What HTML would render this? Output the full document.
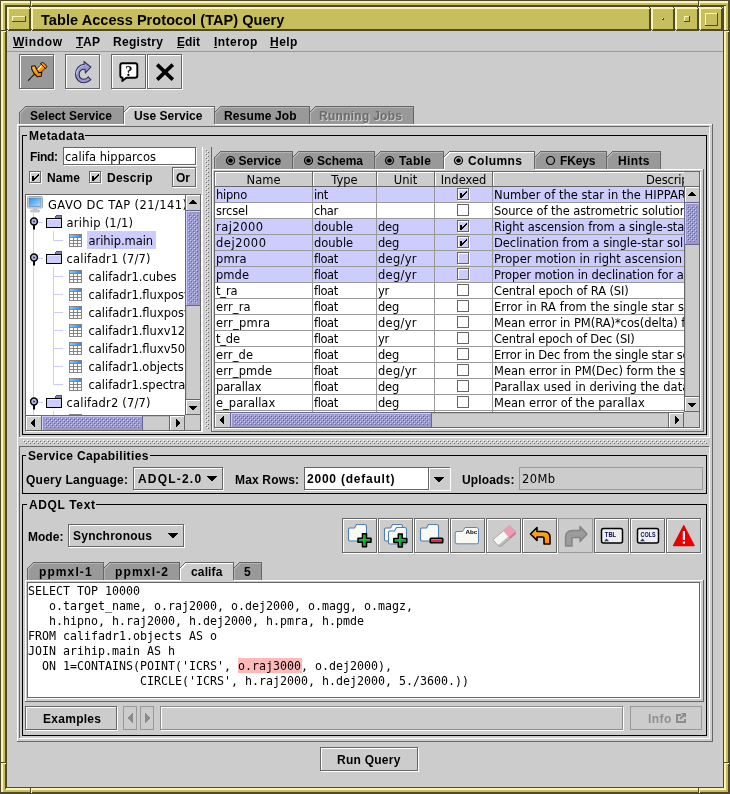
<!DOCTYPE html>
<html lang="en"><head><meta charset="utf-8"><title>Table Access Protocol (TAP) Query</title>
<style>
html,body{margin:0;padding:0;background:#cccccc;}
#w{will-change:transform;position:relative;width:730px;height:794px;overflow:hidden;background:#cccccc;}
#w div,#w span,#w svg{position:absolute;}
#w svg{overflow:visible;}
.t{white-space:pre;height:16px;line-height:16px;color:#000;font-size:12px;}
.b{font-family:"Liberation Sans",sans-serif;font-weight:bold;}
.p{font-family:"DejaVu Sans","Liberation Sans",sans-serif;font-size:11.5px;}
.m{font-family:"DejaVu Sans Mono","Liberation Mono",monospace;font-size:11.63px;height:15px;line-height:15px;}
.ttl{font-family:"Liberation Sans",sans-serif;font-weight:bold;font-size:14.5px;letter-spacing:0.06px;}
</style></head>
<body><div id="w">
<div style="left:0px;top:0px;width:730px;height:794px;background:#c7bf5d;"></div>
<div style="left:0px;top:0px;width:730px;height:1px;background:#4e4a2a;"></div>
<div style="left:0px;top:0px;width:1px;height:794px;background:#4e4a2a;"></div>
<div style="left:1px;top:1px;width:727px;height:2px;background:#fbf5b5;"></div>
<div style="left:1px;top:1px;width:2px;height:791px;background:#fbf5b5;"></div>
<div style="left:1px;top:792px;width:729px;height:2px;background:#4e4a2a;"></div>
<div style="left:728px;top:1px;width:2px;height:793px;background:#4e4a2a;"></div>
<div style="left:5px;top:5px;width:722px;height:2px;background:#4e4a2a;"></div>
<div style="left:5px;top:5px;width:2px;height:784px;background:#4e4a2a;"></div>
<div style="left:723px;top:7px;width:1px;height:781px;background:#4e4a2a;"></div>
<div style="left:724px;top:6px;width:2px;height:782px;background:#fbf5b5;"></div>
<div style="left:7px;top:787px;width:717px;height:1px;background:#4e4a2a;"></div>
<div style="left:6px;top:788px;width:720px;height:2px;background:#fbf5b5;"></div>
<div style="left:726px;top:3px;width:2px;height:789px;background:#c7bf5d;"></div>
<div style="left:3px;top:790px;width:725px;height:2px;background:#c7bf5d;"></div>
<div style="left:1px;top:791px;width:2px;height:1px;background:#fbf5b5;"></div>
<div style="left:1px;top:30px;width:5px;height:1px;background:#4e4a2a;"></div>
<div style="left:1px;top:31px;width:5px;height:1px;background:#fbf5b5;"></div>
<div style="left:724px;top:30px;width:5px;height:1px;background:#4e4a2a;"></div>
<div style="left:724px;top:31px;width:5px;height:1px;background:#fbf5b5;"></div>
<div style="left:1px;top:762px;width:5px;height:1px;background:#4e4a2a;"></div>
<div style="left:1px;top:763px;width:5px;height:1px;background:#fbf5b5;"></div>
<div style="left:724px;top:762px;width:5px;height:1px;background:#4e4a2a;"></div>
<div style="left:724px;top:763px;width:5px;height:1px;background:#fbf5b5;"></div>
<div style="left:30px;top:1px;width:1px;height:5px;background:#4e4a2a;"></div>
<div style="left:31px;top:1px;width:1px;height:5px;background:#fbf5b5;"></div>
<div style="left:30px;top:788px;width:1px;height:5px;background:#4e4a2a;"></div>
<div style="left:31px;top:788px;width:1px;height:5px;background:#fbf5b5;"></div>
<div style="left:698px;top:1px;width:1px;height:5px;background:#4e4a2a;"></div>
<div style="left:699px;top:1px;width:1px;height:5px;background:#fbf5b5;"></div>
<div style="left:698px;top:788px;width:1px;height:5px;background:#4e4a2a;"></div>
<div style="left:699px;top:788px;width:1px;height:5px;background:#fbf5b5;"></div>
<div style="left:7px;top:7px;width:24px;height:24px;background:#c7bf5d;"></div>
<div style="left:7px;top:7px;width:24px;height:2px;background:#fbf5b5;"></div>
<div style="left:7px;top:7px;width:2px;height:24px;background:#fbf5b5;"></div>
<div style="left:7px;top:29px;width:24px;height:2px;background:#4e4a2a;"></div>
<div style="left:29px;top:7px;width:2px;height:24px;background:#4e4a2a;"></div>
<div style="left:7px;top:30px;width:1px;height:1px;background:#fbf5b5;"></div>
<div style="left:30px;top:7px;width:1px;height:1px;background:#fbf5b5;"></div>
<div style="left:8px;top:29px;width:1px;height:1px;background:#fbf5b5;"></div>
<div style="left:29px;top:8px;width:1px;height:1px;background:#fbf5b5;"></div>
<div style="left:31px;top:7px;width:620px;height:24px;background:#c7bf5d;"></div>
<div style="left:31px;top:7px;width:620px;height:2px;background:#fbf5b5;"></div>
<div style="left:31px;top:7px;width:2px;height:24px;background:#fbf5b5;"></div>
<div style="left:31px;top:29px;width:620px;height:2px;background:#4e4a2a;"></div>
<div style="left:649px;top:7px;width:2px;height:24px;background:#4e4a2a;"></div>
<div style="left:31px;top:30px;width:1px;height:1px;background:#fbf5b5;"></div>
<div style="left:650px;top:7px;width:1px;height:1px;background:#fbf5b5;"></div>
<div style="left:32px;top:29px;width:1px;height:1px;background:#fbf5b5;"></div>
<div style="left:649px;top:8px;width:1px;height:1px;background:#fbf5b5;"></div>
<div style="left:651px;top:7px;width:24px;height:24px;background:#c7bf5d;"></div>
<div style="left:651px;top:7px;width:24px;height:2px;background:#fbf5b5;"></div>
<div style="left:651px;top:7px;width:2px;height:24px;background:#fbf5b5;"></div>
<div style="left:651px;top:29px;width:24px;height:2px;background:#4e4a2a;"></div>
<div style="left:673px;top:7px;width:2px;height:24px;background:#4e4a2a;"></div>
<div style="left:651px;top:30px;width:1px;height:1px;background:#fbf5b5;"></div>
<div style="left:674px;top:7px;width:1px;height:1px;background:#fbf5b5;"></div>
<div style="left:652px;top:29px;width:1px;height:1px;background:#fbf5b5;"></div>
<div style="left:673px;top:8px;width:1px;height:1px;background:#fbf5b5;"></div>
<div style="left:675px;top:7px;width:24px;height:24px;background:#c7bf5d;"></div>
<div style="left:675px;top:7px;width:24px;height:2px;background:#fbf5b5;"></div>
<div style="left:675px;top:7px;width:2px;height:24px;background:#fbf5b5;"></div>
<div style="left:675px;top:29px;width:24px;height:2px;background:#4e4a2a;"></div>
<div style="left:697px;top:7px;width:2px;height:24px;background:#4e4a2a;"></div>
<div style="left:675px;top:30px;width:1px;height:1px;background:#fbf5b5;"></div>
<div style="left:698px;top:7px;width:1px;height:1px;background:#fbf5b5;"></div>
<div style="left:676px;top:29px;width:1px;height:1px;background:#fbf5b5;"></div>
<div style="left:697px;top:8px;width:1px;height:1px;background:#fbf5b5;"></div>
<div style="left:699px;top:7px;width:24px;height:24px;background:#c7bf5d;"></div>
<div style="left:699px;top:7px;width:24px;height:2px;background:#fbf5b5;"></div>
<div style="left:699px;top:7px;width:2px;height:24px;background:#fbf5b5;"></div>
<div style="left:699px;top:29px;width:24px;height:2px;background:#4e4a2a;"></div>
<div style="left:721px;top:7px;width:2px;height:24px;background:#4e4a2a;"></div>
<div style="left:699px;top:30px;width:1px;height:1px;background:#fbf5b5;"></div>
<div style="left:722px;top:7px;width:1px;height:1px;background:#fbf5b5;"></div>
<div style="left:700px;top:29px;width:1px;height:1px;background:#fbf5b5;"></div>
<div style="left:721px;top:8px;width:1px;height:1px;background:#fbf5b5;"></div>
<div style="left:12px;top:16px;width:14px;height:6px;background:#c7bf5d;"></div>
<div style="left:12px;top:16px;width:14px;height:1px;background:#fbf5b5;"></div>
<div style="left:12px;top:16px;width:1px;height:6px;background:#fbf5b5;"></div>
<div style="left:12px;top:21px;width:14px;height:1px;background:#4e4a2a;"></div>
<div style="left:25px;top:16px;width:1px;height:6px;background:#4e4a2a;"></div>
<div style="left:662px;top:18px;width:2px;height:2px;background:#c7bf5d;"></div>
<div style="left:662px;top:18px;width:2px;height:1px;background:#fbf5b5;"></div>
<div style="left:662px;top:18px;width:1px;height:2px;background:#fbf5b5;"></div>
<div style="left:662px;top:19px;width:2px;height:1px;background:#4e4a2a;"></div>
<div style="left:663px;top:18px;width:1px;height:2px;background:#4e4a2a;"></div>
<div style="left:684px;top:16px;width:6px;height:6px;background:#c7bf5d;"></div>
<div style="left:684px;top:16px;width:6px;height:1px;background:#fbf5b5;"></div>
<div style="left:684px;top:16px;width:1px;height:6px;background:#fbf5b5;"></div>
<div style="left:684px;top:21px;width:6px;height:1px;background:#4e4a2a;"></div>
<div style="left:689px;top:16px;width:1px;height:6px;background:#4e4a2a;"></div>
<div style="left:705px;top:13px;width:13px;height:13px;background:#c7bf5d;"></div>
<div style="left:705px;top:13px;width:13px;height:1px;background:#fbf5b5;"></div>
<div style="left:705px;top:13px;width:1px;height:13px;background:#fbf5b5;"></div>
<div style="left:705px;top:25px;width:13px;height:1px;background:#4e4a2a;"></div>
<div style="left:717px;top:13px;width:1px;height:13px;background:#4e4a2a;"></div>
<span id="ttl" class="t ttl" style="left:41px;top:12px;">Table Access Protocol (TAP) Query</span>
<div style="left:7px;top:31px;width:716px;height:756px;background:#cccccc;"></div>
<div style="left:7px;top:51px;width:716px;height:1px;background:#999999;"></div>
<span id="t1" class="t b" style="left:13px;top:34px;letter-spacing:0.622px;">Window</span>
<span id="t2" class="t b" style="left:76px;top:34px;letter-spacing:0.445px;">TAP</span>
<span id="t3" class="t b" style="left:113px;top:34px;letter-spacing:0.281px;">Registry</span>
<span id="t4" class="t b" style="left:177px;top:34px;letter-spacing:0.109px;">Edit</span>
<span id="t5" class="t b" style="left:214px;top:34px;letter-spacing:0.455px;">Interop</span>
<span id="t6" class="t b" style="left:270px;top:34px;letter-spacing:0.461px;">Help</span>
<div style="left:13px;top:47px;width:11px;height:1px;background:#000;"></div>
<div style="left:76px;top:47px;width:7px;height:1px;background:#000;"></div>
<div style="left:177px;top:47px;width:7px;height:1px;background:#000;"></div>
<div style="left:214px;top:47px;width:3px;height:1px;background:#000;"></div>
<div style="left:270px;top:47px;width:8px;height:1px;background:#000;"></div>
<div style="left:19px;top:54px;width:35px;height:35px;box-sizing:border-box;border:1px solid #666666;background:#999999;box-shadow:inset 1px 1px 0 #ffffff,1px 1px 0 #ffffff;"></div>
<div style="left:65px;top:54px;width:35px;height:35px;box-sizing:border-box;border:1px solid #666666;background:#cccccc;box-shadow:inset 1px 1px 0 #ffffff,1px 1px 0 #ffffff;"></div>
<div style="left:111px;top:54px;width:35px;height:35px;box-sizing:border-box;border:1px solid #666666;background:#cccccc;box-shadow:inset 1px 1px 0 #ffffff,1px 1px 0 #ffffff;"></div>
<div style="left:147px;top:54px;width:35px;height:35px;box-sizing:border-box;border:1px solid #666666;background:#cccccc;box-shadow:inset 1px 1px 0 #ffffff,1px 1px 0 #ffffff;"></div>
<svg style="left:26px;top:60px;" width="24" height="24" viewBox="0 0 24 24">
<defs><linearGradient id="pg" x1="0" y1="0" x2="1" y2="1"><stop offset="0" stop-color="#ffd24a"/><stop offset="0.45" stop-color="#fb9a12"/><stop offset="1" stop-color="#e87a00"/></linearGradient></defs>
<line x1="2.2" y1="20.8" x2="9" y2="14" stroke="#111" stroke-width="1.5"/>
<line x1="3.4" y1="20.4" x2="9.4" y2="14.4" stroke="#f4f4f4" stroke-width="0.9" stroke-dasharray="1 0.8"/>
<g transform="translate(-0.7,0.7)"><path d="M16 3.6 L20 7.400 L13.800 13.800 L10 10 Z" fill="url(#pg)" stroke="#2a1800" stroke-width="0.9"/>
<line x1="11.6" y1="9.800" x2="16.6" y2="4.800" stroke="#ffe89a" stroke-width="1.5"/>
<path d="M15.200 2.800 L17.600 1.600 L21.600 5.600 L20.300 8 Z" fill="#f08a00" stroke="#1a0e00" stroke-width="1"/>
<line x1="17" y1="3" x2="20.300" y2="6.200" stroke="#ffb63c" stroke-width="1"/></g>
<path d="M5.600 6.200 L9 5.800 L10.600 9.200 L12.800 12.600 L15.700 12.200 L15.300 16.300 L11.200 16.700 L8 13.400 L5.800 9.200 Z" fill="url(#pg)" stroke="#1a0e00" stroke-width="1.100" stroke-linejoin="round"/>
</svg>
<svg style="left:72px;top:59px;" width="24" height="26" viewBox="0 0 24 26"><g transform="translate(1.3,2.2) scale(0.9)">
<path d="M12 3.5 L12 0.5 L19.5 6.5 L13.5 13 L13 9 C9 8.500 6.500 11 6.500 14.500 C6.500 18 9 20 12 20 C14 20 15.500 19 16.500 17.500 L19.500 20.500 C17.500 22.500 15 24 12 24 C6.500 24 2.500 20 2.500 14.500 C2.500 8.500 6.500 4 12 3.500 Z" fill="#9a9ad0" stroke="#2c2c55" stroke-width="1.2"/>
<path d="M12 4.700 C7 5.200 3.800 9 3.800 14.500" fill="none" stroke="#d0d0f4" stroke-width="1.1"/>
</g></svg>
<svg style="left:119px;top:62px;" width="22" height="22" viewBox="0 0 22 22">
<path d="M3.5 1.300 H16 Q18.300 1.300 18.300 3.600 V13.500 Q18.300 15.800 16 15.800 H7.500 L3.200 19 L3.600 15.800 Q1.300 15.800 1.300 13.500 V3.600 Q1.300 1.300 3.500 1.300 Z" fill="#fff" stroke="#000" stroke-width="1.9" stroke-linejoin="round"/>
<text x="9.9" y="13.6" font-family="Liberation Serif, serif" font-weight="bold" font-size="14.500" text-anchor="middle" fill="#000">?</text>
</svg>
<svg style="left:155px;top:62px;" width="20" height="20" viewBox="0 0 20 20"><path d="M2.2 2.600 L17.800 17.600 M17.800 2.600 L2.200 17.600" stroke="#000" stroke-width="3.600" stroke-linecap="butt"/></svg>
<div style="left:17px;top:124px;width:695px;height:1px;background:#ffffff;"></div>
<div style="left:17px;top:124px;width:1px;height:617px;background:#ffffff;"></div>
<div style="left:712px;top:124px;width:1px;height:618px;background:#666666;"></div>
<div style="left:17px;top:741px;width:696px;height:1px;background:#666666;"></div>
<div style="left:19px;top:126px;width:690px;height:1px;background:#666666;"></div>
<div style="left:19px;top:126px;width:1px;height:311px;background:#666666;"></div>
<div style="left:19px;top:437px;width:691px;height:1px;background:#ffffff;"></div>
<div style="left:709px;top:127px;width:1px;height:311px;background:#ffffff;"></div>
<div style="left:19px;top:446px;width:690px;height:1px;background:#666666;"></div>
<div style="left:19px;top:446px;width:1px;height:292px;background:#666666;"></div>
<div style="left:19px;top:738px;width:691px;height:1px;background:#ffffff;"></div>
<div style="left:709px;top:447px;width:1px;height:292px;background:#ffffff;"></div>
<svg style="left:19px;top:106px;shape-rendering:crispEdges;overflow:hidden;" width="105" height="18" viewBox="0 0 105 18"><polygon points="0.5,18 0.5,6.5 6.5,0.5 104.5,0.5 104.5,18" fill="#999999" stroke="none"/><polyline points="1.5,18 1.5,7 7,1.5 104,1.5" fill="none" stroke="#b3b3b3" stroke-width="1"/><polyline points="0.5,18 0.5,6.5 6.5,0.5 104.5,0.5 104.5,18" fill="none" stroke="#666666" stroke-width="1"/></svg>
<svg style="left:123px;top:106px;shape-rendering:crispEdges;overflow:hidden;" width="92" height="20" viewBox="0 0 92 20"><polygon points="0.5,20 0.5,6.5 6.5,0.5 91.5,0.5 91.5,20" fill="#cccccc" stroke="none"/><polyline points="1.5,19 1.5,7 7,1.5 91,1.5" fill="none" stroke="#ffffff" stroke-width="1"/><polyline points="0.5,18 0.5,6.5 6.5,0.5 91.5,0.5 91.5,18" fill="none" stroke="#666666" stroke-width="1"/></svg>
<svg style="left:214px;top:106px;shape-rendering:crispEdges;overflow:hidden;" width="96" height="18" viewBox="0 0 96 18"><polygon points="0.5,18 0.5,6.5 6.5,0.5 95.5,0.5 95.5,18" fill="#999999" stroke="none"/><polyline points="1.5,18 1.5,7 7,1.5 95,1.5" fill="none" stroke="#b3b3b3" stroke-width="1"/><polyline points="0.5,18 0.5,6.5 6.5,0.5 95.5,0.5 95.5,18" fill="none" stroke="#666666" stroke-width="1"/></svg>
<svg style="left:309px;top:106px;shape-rendering:crispEdges;overflow:hidden;" width="105" height="18" viewBox="0 0 105 18"><polygon points="0.5,18 0.5,6.5 6.5,0.5 104.5,0.5 104.5,18" fill="#999999" stroke="none"/><polyline points="1.5,18 1.5,7 7,1.5 104,1.5" fill="none" stroke="#b3b3b3" stroke-width="1"/><polyline points="0.5,18 0.5,6.5 6.5,0.5 104.5,0.5 104.5,18" fill="none" stroke="#666666" stroke-width="1"/></svg>
<span id="t7" class="t b" style="left:30px;top:108px;letter-spacing:0.046px;">Select Service</span>
<span id="t8" class="t b" style="left:134px;top:108px;letter-spacing:0.034px;">Use Service</span>
<span id="t9" class="t b" style="left:224px;top:108px;letter-spacing:0.138px;">Resume Job</span>
<span id="t10" class="t b" style="left:320px;top:109px;color:#d2d2d2;letter-spacing:0.273px;">Running Jobs</span>
<span id="t11" class="t b" style="left:319px;top:108px;color:#6b6b6b;letter-spacing:0.273px;">Running Jobs</span>
<svg style="left:23px;top:440px;shape-rendering:crispEdges;" width="684" height="4" viewBox="0 0 684 4"><defs><pattern id="bp140" width="4" height="4" patternUnits="userSpaceOnUse"><rect x="0" y="0" width="1" height="1" fill="#ffffff"/><rect x="1" y="1" width="1" height="1" fill="#666666"/><rect x="2" y="2" width="1" height="1" fill="#ffffff"/><rect x="3" y="3" width="1" height="1" fill="#666666"/></pattern></defs><rect width="684" height="4" fill="url(#bp140)"/></svg>
<div style="left:22px;top:135px;width:5px;height:1px;background:#000;"></div>
<div style="left:85px;top:135px;width:622px;height:1px;background:#000;"></div>
<div style="left:22px;top:135px;width:1px;height:300px;background:#000;"></div>
<div style="left:706px;top:135px;width:1px;height:300px;background:#000;"></div>
<div style="left:22px;top:434px;width:685px;height:1px;background:#000;"></div>
<span id="t12" class="t b" style="left:29px;top:128px;letter-spacing:0.483px;">Metadata</span>
<span id="t13" class="t b" style="left:30px;top:149px;letter-spacing:-0.332px;">Find:</span>
<div style="left:63px;top:147px;width:133px;height:18px;box-sizing:border-box;border:1px solid #666666;background:#ffffff;box-shadow:inset 1px 1px 0 #ffffff,1px 1px 0 #ffffff;"></div>
<span id="t14" class="t p" style="left:65px;top:149px;letter-spacing:0.035px;">califa hipparcos</span>
<div style="left:29px;top:171px;width:12px;height:12px;box-sizing:border-box;border:1px solid #666666;background:#cccccc;box-shadow:inset 1px 1px 0 #ffffff,1px 1px 0 #ffffff;"></div>
<div style="left:32px;top:176px;width:2px;height:5px;background:#000;"></div>
<div style="left:38px;top:174px;width:1px;height:2px;background:#000;"></div>
<div style="left:37px;top:175px;width:1px;height:2px;background:#000;"></div>
<div style="left:36px;top:176px;width:1px;height:2px;background:#000;"></div>
<div style="left:35px;top:177px;width:1px;height:2px;background:#000;"></div>
<div style="left:34px;top:178px;width:1px;height:2px;background:#000;"></div>
<span id="t15" class="t b" style="left:47px;top:170px;letter-spacing:0.104px;">Name</span>
<div style="left:89px;top:171px;width:12px;height:12px;box-sizing:border-box;border:1px solid #666666;background:#cccccc;box-shadow:inset 1px 1px 0 #ffffff,1px 1px 0 #ffffff;"></div>
<div style="left:92px;top:176px;width:2px;height:5px;background:#000;"></div>
<div style="left:98px;top:174px;width:1px;height:2px;background:#000;"></div>
<div style="left:97px;top:175px;width:1px;height:2px;background:#000;"></div>
<div style="left:96px;top:176px;width:1px;height:2px;background:#000;"></div>
<div style="left:95px;top:177px;width:1px;height:2px;background:#000;"></div>
<div style="left:94px;top:178px;width:1px;height:2px;background:#000;"></div>
<span id="t16" class="t b" style="left:107px;top:170px;letter-spacing:0.245px;">Descrip</span>
<div style="left:172px;top:167px;width:24px;height:20px;box-sizing:border-box;border:1px solid #666666;background:#cccccc;box-shadow:inset 1px 1px 0 #ffffff,1px 1px 0 #ffffff;"></div>
<span id="t17" class="t b" style="left:176px;top:170px;letter-spacing:-0.016px;">Or</span>
<div style="left:25px;top:194px;width:176px;height:237px;box-sizing:border-box;border:1px solid #666666;background:#ffffff;box-shadow:1px 1px 0 #ffffff;"></div>
<div style="left:26px;top:195px;width:159px;height:220px;overflow:hidden;background:#fff;">
<div style="left:7px;top:18px;width:1px;height:220px;background:#ccccff;"></div>
<div style="left:12px;top:27px;width:5px;height:1px;background:#ccccff;"></div>
<div style="left:12px;top:63px;width:5px;height:1px;background:#ccccff;"></div>
<div style="left:12px;top:207px;width:5px;height:1px;background:#ccccff;"></div>
<div style="left:27px;top:36px;width:1px;height:10px;background:#ccccff;"></div>
<div style="left:27px;top:45px;width:10px;height:1px;background:#ccccff;"></div>
<div style="left:27px;top:72px;width:1px;height:118px;background:#ccccff;"></div>
<div style="left:27px;top:81px;width:10px;height:1px;background:#ccccff;"></div>
<div style="left:27px;top:99px;width:10px;height:1px;background:#ccccff;"></div>
<div style="left:27px;top:117px;width:10px;height:1px;background:#ccccff;"></div>
<div style="left:27px;top:135px;width:10px;height:1px;background:#ccccff;"></div>
<div style="left:27px;top:153px;width:10px;height:1px;background:#ccccff;"></div>
<div style="left:27px;top:171px;width:10px;height:1px;background:#ccccff;"></div>
<div style="left:27px;top:189px;width:10px;height:1px;background:#ccccff;"></div>
<div style="left:27px;top:216px;width:1px;height:10px;background:#ccccff;"></div>
<div style="left:61px;top:36px;width:69px;height:18px;background:#ccccff;"></div>
<svg style="left:1px;top:1px;" width="16" height="17" viewBox="0 0 16 17">
<defs><linearGradient id="scr" x1="0" y1="0" x2="1" y2="1"><stop offset="0" stop-color="#2f8fe6"/><stop offset="1" stop-color="#b4dcfa"/></linearGradient></defs>
<rect x="0.5" y="0.5" width="15" height="11.5" rx="1.2" fill="#e4e4e4" stroke="#a8a8a8"/>
<rect x="2" y="2" width="12" height="8.5" fill="url(#scr)" stroke="#4a7fb8" stroke-width="0.6"/>
<rect x="6" y="12" width="4" height="2.5" fill="#c8c8c8"/>
<rect x="3.5" y="14" width="9" height="2" rx="0.8" fill="#d8d8d8" stroke="#a8a8a8" stroke-width="0.7"/>
</svg>
<span id="t18" class="t p" style="left:22px;top:2px;letter-spacing:0.422px;">GAVO DC TAP (21/141)</span>
<svg style="left:3px;top:22px;" width="10" height="14" viewBox="0 0 10 14">
<circle cx="5" cy="4.5" r="3.4" fill="#b8b8e6" stroke="#000" stroke-width="1.5"/>
<circle cx="5" cy="4.5" r="1" fill="#333366"/>
<rect x="4" y="8" width="2" height="4.5" fill="#000"/>
</svg>
<svg style="left:20px;top:20px;shape-rendering:crispEdges;" width="16" height="13" viewBox="0 0 16 13">
<path d="M9 3 L10.5 0.5 H15.5 V3" fill="#8080b8" stroke="#50508a" stroke-width="1"/>
<rect x="0.5" y="3.5" width="15" height="9" fill="#ccccff" stroke="#000" stroke-width="1"/>
<path d="M1.5 4.5 H14.5" stroke="#e8e8ff" stroke-width="1"/>
</svg>
<span id="t19" class="t p" style="left:40.5px;top:20px;letter-spacing:0.246px;">arihip (1/1)</span>
<svg style="left:3px;top:58px;" width="10" height="14" viewBox="0 0 10 14">
<circle cx="5" cy="4.5" r="3.4" fill="#b8b8e6" stroke="#000" stroke-width="1.5"/>
<circle cx="5" cy="4.5" r="1" fill="#333366"/>
<rect x="4" y="8" width="2" height="4.5" fill="#000"/>
</svg>
<svg style="left:20px;top:56px;shape-rendering:crispEdges;" width="16" height="13" viewBox="0 0 16 13">
<path d="M9 3 L10.5 0.5 H15.5 V3" fill="#8080b8" stroke="#50508a" stroke-width="1"/>
<rect x="0.5" y="3.5" width="15" height="9" fill="#ccccff" stroke="#000" stroke-width="1"/>
<path d="M1.5 4.5 H14.5" stroke="#e8e8ff" stroke-width="1"/>
</svg>
<span id="t20" class="t p" style="left:40.5px;top:56px;letter-spacing:0.190px;">califadr1 (7/7)</span>
<svg style="left:3px;top:202px;" width="10" height="14" viewBox="0 0 10 14">
<circle cx="5" cy="4.5" r="3.4" fill="#b8b8e6" stroke="#000" stroke-width="1.5"/>
<circle cx="5" cy="4.5" r="1" fill="#333366"/>
<rect x="4" y="8" width="2" height="4.5" fill="#000"/>
</svg>
<svg style="left:20px;top:200px;shape-rendering:crispEdges;" width="16" height="13" viewBox="0 0 16 13">
<path d="M9 3 L10.5 0.5 H15.5 V3" fill="#8080b8" stroke="#50508a" stroke-width="1"/>
<rect x="0.5" y="3.5" width="15" height="9" fill="#ccccff" stroke="#000" stroke-width="1"/>
<path d="M1.5 4.5 H14.5" stroke="#e8e8ff" stroke-width="1"/>
</svg>
<span id="t21" class="t p" style="left:40.5px;top:200px;letter-spacing:0.190px;">califadr2 (7/7)</span>
<svg style="left:43px;top:39px;shape-rendering:crispEdges;" width="13" height="13" viewBox="0 0 13 13">
<defs><linearGradient id="tbh" x1="0" y1="0" x2="1" y2="0"><stop offset="0" stop-color="#8accfc"/><stop offset="1" stop-color="#2f86e6"/></linearGradient></defs>
<rect x="0" y="0" width="13" height="13" rx="1.2" fill="#858585"/>
<rect x="1" y="1" width="11" height="2" fill="url(#tbh)"/><rect x="1" y="4" width="3" height="2" fill="#fff"/><rect x="1" y="7" width="3" height="2" fill="#fff"/><rect x="1" y="10" width="3" height="2" fill="#fff"/><rect x="5" y="4" width="3" height="2" fill="#fff"/><rect x="5" y="7" width="3" height="2" fill="#fff"/><rect x="5" y="10" width="3" height="2" fill="#fff"/><rect x="9" y="4" width="3" height="2" fill="#fff"/><rect x="9" y="7" width="3" height="2" fill="#fff"/><rect x="9" y="10" width="3" height="2" fill="#fff"/></svg>
<span id="t22" class="t p" style="left:62.5px;top:38px;letter-spacing:-0.056px;">arihip.main</span>
<svg style="left:43px;top:75px;shape-rendering:crispEdges;" width="13" height="13" viewBox="0 0 13 13">
<defs><linearGradient id="tbh" x1="0" y1="0" x2="1" y2="0"><stop offset="0" stop-color="#8accfc"/><stop offset="1" stop-color="#2f86e6"/></linearGradient></defs>
<rect x="0" y="0" width="13" height="13" rx="1.2" fill="#858585"/>
<rect x="1" y="1" width="11" height="2" fill="url(#tbh)"/><rect x="1" y="4" width="3" height="2" fill="#fff"/><rect x="1" y="7" width="3" height="2" fill="#fff"/><rect x="1" y="10" width="3" height="2" fill="#fff"/><rect x="5" y="4" width="3" height="2" fill="#fff"/><rect x="5" y="7" width="3" height="2" fill="#fff"/><rect x="5" y="10" width="3" height="2" fill="#fff"/><rect x="9" y="4" width="3" height="2" fill="#fff"/><rect x="9" y="7" width="3" height="2" fill="#fff"/><rect x="9" y="10" width="3" height="2" fill="#fff"/></svg>
<span id="t23" class="t p" style="left:62.5px;top:74px;letter-spacing:0.011px;">califadr1.cubes</span>
<svg style="left:43px;top:93px;shape-rendering:crispEdges;" width="13" height="13" viewBox="0 0 13 13">
<defs><linearGradient id="tbh" x1="0" y1="0" x2="1" y2="0"><stop offset="0" stop-color="#8accfc"/><stop offset="1" stop-color="#2f86e6"/></linearGradient></defs>
<rect x="0" y="0" width="13" height="13" rx="1.2" fill="#858585"/>
<rect x="1" y="1" width="11" height="2" fill="url(#tbh)"/><rect x="1" y="4" width="3" height="2" fill="#fff"/><rect x="1" y="7" width="3" height="2" fill="#fff"/><rect x="1" y="10" width="3" height="2" fill="#fff"/><rect x="5" y="4" width="3" height="2" fill="#fff"/><rect x="5" y="7" width="3" height="2" fill="#fff"/><rect x="5" y="10" width="3" height="2" fill="#fff"/><rect x="9" y="4" width="3" height="2" fill="#fff"/><rect x="9" y="7" width="3" height="2" fill="#fff"/><rect x="9" y="10" width="3" height="2" fill="#fff"/></svg>
<span id="t24" class="t p" style="left:62.5px;top:92px;">califadr1.fluxposv1200</span>
<svg style="left:43px;top:111px;shape-rendering:crispEdges;" width="13" height="13" viewBox="0 0 13 13">
<defs><linearGradient id="tbh" x1="0" y1="0" x2="1" y2="0"><stop offset="0" stop-color="#8accfc"/><stop offset="1" stop-color="#2f86e6"/></linearGradient></defs>
<rect x="0" y="0" width="13" height="13" rx="1.2" fill="#858585"/>
<rect x="1" y="1" width="11" height="2" fill="url(#tbh)"/><rect x="1" y="4" width="3" height="2" fill="#fff"/><rect x="1" y="7" width="3" height="2" fill="#fff"/><rect x="1" y="10" width="3" height="2" fill="#fff"/><rect x="5" y="4" width="3" height="2" fill="#fff"/><rect x="5" y="7" width="3" height="2" fill="#fff"/><rect x="5" y="10" width="3" height="2" fill="#fff"/><rect x="9" y="4" width="3" height="2" fill="#fff"/><rect x="9" y="7" width="3" height="2" fill="#fff"/><rect x="9" y="10" width="3" height="2" fill="#fff"/></svg>
<span id="t25" class="t p" style="left:62.5px;top:110px;">califadr1.fluxposv500</span>
<svg style="left:43px;top:129px;shape-rendering:crispEdges;" width="13" height="13" viewBox="0 0 13 13">
<defs><linearGradient id="tbh" x1="0" y1="0" x2="1" y2="0"><stop offset="0" stop-color="#8accfc"/><stop offset="1" stop-color="#2f86e6"/></linearGradient></defs>
<rect x="0" y="0" width="13" height="13" rx="1.2" fill="#858585"/>
<rect x="1" y="1" width="11" height="2" fill="url(#tbh)"/><rect x="1" y="4" width="3" height="2" fill="#fff"/><rect x="1" y="7" width="3" height="2" fill="#fff"/><rect x="1" y="10" width="3" height="2" fill="#fff"/><rect x="5" y="4" width="3" height="2" fill="#fff"/><rect x="5" y="7" width="3" height="2" fill="#fff"/><rect x="5" y="10" width="3" height="2" fill="#fff"/><rect x="9" y="4" width="3" height="2" fill="#fff"/><rect x="9" y="7" width="3" height="2" fill="#fff"/><rect x="9" y="10" width="3" height="2" fill="#fff"/></svg>
<span id="t26" class="t p" style="left:62.5px;top:128px;">califadr1.fluxv1200</span>
<svg style="left:43px;top:147px;shape-rendering:crispEdges;" width="13" height="13" viewBox="0 0 13 13">
<defs><linearGradient id="tbh" x1="0" y1="0" x2="1" y2="0"><stop offset="0" stop-color="#8accfc"/><stop offset="1" stop-color="#2f86e6"/></linearGradient></defs>
<rect x="0" y="0" width="13" height="13" rx="1.2" fill="#858585"/>
<rect x="1" y="1" width="11" height="2" fill="url(#tbh)"/><rect x="1" y="4" width="3" height="2" fill="#fff"/><rect x="1" y="7" width="3" height="2" fill="#fff"/><rect x="1" y="10" width="3" height="2" fill="#fff"/><rect x="5" y="4" width="3" height="2" fill="#fff"/><rect x="5" y="7" width="3" height="2" fill="#fff"/><rect x="5" y="10" width="3" height="2" fill="#fff"/><rect x="9" y="4" width="3" height="2" fill="#fff"/><rect x="9" y="7" width="3" height="2" fill="#fff"/><rect x="9" y="10" width="3" height="2" fill="#fff"/></svg>
<span id="t27" class="t p" style="left:62.5px;top:146px;">califadr1.fluxv500</span>
<svg style="left:43px;top:165px;shape-rendering:crispEdges;" width="13" height="13" viewBox="0 0 13 13">
<defs><linearGradient id="tbh" x1="0" y1="0" x2="1" y2="0"><stop offset="0" stop-color="#8accfc"/><stop offset="1" stop-color="#2f86e6"/></linearGradient></defs>
<rect x="0" y="0" width="13" height="13" rx="1.2" fill="#858585"/>
<rect x="1" y="1" width="11" height="2" fill="url(#tbh)"/><rect x="1" y="4" width="3" height="2" fill="#fff"/><rect x="1" y="7" width="3" height="2" fill="#fff"/><rect x="1" y="10" width="3" height="2" fill="#fff"/><rect x="5" y="4" width="3" height="2" fill="#fff"/><rect x="5" y="7" width="3" height="2" fill="#fff"/><rect x="5" y="10" width="3" height="2" fill="#fff"/><rect x="9" y="4" width="3" height="2" fill="#fff"/><rect x="9" y="7" width="3" height="2" fill="#fff"/><rect x="9" y="10" width="3" height="2" fill="#fff"/></svg>
<span id="t28" class="t p" style="left:62.5px;top:164px;">califadr1.objects</span>
<svg style="left:43px;top:183px;shape-rendering:crispEdges;" width="13" height="13" viewBox="0 0 13 13">
<defs><linearGradient id="tbh" x1="0" y1="0" x2="1" y2="0"><stop offset="0" stop-color="#8accfc"/><stop offset="1" stop-color="#2f86e6"/></linearGradient></defs>
<rect x="0" y="0" width="13" height="13" rx="1.2" fill="#858585"/>
<rect x="1" y="1" width="11" height="2" fill="url(#tbh)"/><rect x="1" y="4" width="3" height="2" fill="#fff"/><rect x="1" y="7" width="3" height="2" fill="#fff"/><rect x="1" y="10" width="3" height="2" fill="#fff"/><rect x="5" y="4" width="3" height="2" fill="#fff"/><rect x="5" y="7" width="3" height="2" fill="#fff"/><rect x="5" y="10" width="3" height="2" fill="#fff"/><rect x="9" y="4" width="3" height="2" fill="#fff"/><rect x="9" y="7" width="3" height="2" fill="#fff"/><rect x="9" y="10" width="3" height="2" fill="#fff"/></svg>
<span id="t29" class="t p" style="left:62.5px;top:182px;">califadr1.spectra</span>
<svg style="left:43px;top:219px;shape-rendering:crispEdges;" width="13" height="13" viewBox="0 0 13 13">
<defs><linearGradient id="tbh" x1="0" y1="0" x2="1" y2="0"><stop offset="0" stop-color="#8accfc"/><stop offset="1" stop-color="#2f86e6"/></linearGradient></defs>
<rect x="0" y="0" width="13" height="13" rx="1.2" fill="#858585"/>
<rect x="1" y="1" width="11" height="2" fill="url(#tbh)"/><rect x="1" y="4" width="3" height="2" fill="#fff"/><rect x="1" y="7" width="3" height="2" fill="#fff"/><rect x="1" y="10" width="3" height="2" fill="#fff"/><rect x="5" y="4" width="3" height="2" fill="#fff"/><rect x="5" y="7" width="3" height="2" fill="#fff"/><rect x="5" y="10" width="3" height="2" fill="#fff"/><rect x="9" y="4" width="3" height="2" fill="#fff"/><rect x="9" y="7" width="3" height="2" fill="#fff"/><rect x="9" y="10" width="3" height="2" fill="#fff"/></svg>
<span id="t30" class="t p" style="left:62.5px;top:218px;">califadr2.cubes</span>
</div>
<div style="left:185px;top:415px;width:15px;height:15px;background:#cccccc;"></div>
<div style="left:185px;top:195px;width:15px;height:220px;background:#cccccc;"></div>
<div style="left:185px;top:195px;width:1px;height:220px;background:#666666;"></div>
<div style="left:186px;top:210px;width:1px;height:190px;background:#b8b8b8;"></div>
<div style="left:186px;top:195px;width:14px;height:1px;background:#ffffff;"></div>
<div style="left:186px;top:195px;width:1px;height:15px;background:#ffffff;"></div>
<div style="left:192px;top:200px;width:2px;height:1px;background:#000;"></div>
<div style="left:191px;top:201px;width:4px;height:1px;background:#000;"></div>
<div style="left:190px;top:202px;width:6px;height:1px;background:#000;"></div>
<div style="left:189px;top:203px;width:8px;height:1px;background:#000;"></div>
<div style="left:185px;top:399px;width:15px;height:1px;background:#666666;"></div>
<div style="left:186px;top:400px;width:14px;height:1px;background:#ffffff;"></div>
<div style="left:186px;top:400px;width:1px;height:15px;background:#ffffff;"></div>
<div style="left:189px;top:406px;width:8px;height:1px;background:#000;"></div>
<div style="left:190px;top:407px;width:6px;height:1px;background:#000;"></div>
<div style="left:191px;top:408px;width:4px;height:1px;background:#000;"></div>
<div style="left:192px;top:409px;width:2px;height:1px;background:#000;"></div>
<div style="left:186px;top:414px;width:14px;height:1px;background:#666666;"></div>
<div style="left:185px;top:210px;width:15px;height:96px;background:#9999cc;"></div>
<div style="left:185px;top:210px;width:15px;height:1px;background:#666699;"></div>
<div style="left:185px;top:305px;width:15px;height:1px;background:#666699;"></div>
<div style="left:185px;top:210px;width:1px;height:96px;background:#666699;"></div>
<div style="left:186px;top:211px;width:14px;height:1px;background:#ccccff;"></div>
<div style="left:186px;top:211px;width:1px;height:94px;background:#ccccff;"></div>
<svg style="left:188px;top:214px;shape-rendering:crispEdges;" width="10" height="89" viewBox="0 0 10 89"><defs><pattern id="bp240" width="4" height="4" patternUnits="userSpaceOnUse"><rect x="0" y="0" width="1" height="1" fill="#ccccff"/><rect x="1" y="1" width="1" height="1" fill="#666699"/><rect x="2" y="2" width="1" height="1" fill="#ccccff"/><rect x="3" y="3" width="1" height="1" fill="#666699"/></pattern></defs><rect width="10" height="89" fill="url(#bp240)"/></svg>
<div style="left:26px;top:415px;width:159px;height:15px;background:#cccccc;"></div>
<div style="left:26px;top:415px;width:159px;height:1px;background:#666666;"></div>
<div style="left:41px;top:416px;width:129px;height:1px;background:#b8b8b8;"></div>
<div style="left:26px;top:416px;width:1px;height:14px;background:#ffffff;"></div>
<div style="left:26px;top:416px;width:15px;height:1px;background:#ffffff;"></div>
<div style="left:31px;top:422px;width:1px;height:2px;background:#000;"></div>
<div style="left:32px;top:421px;width:1px;height:4px;background:#000;"></div>
<div style="left:33px;top:420px;width:1px;height:6px;background:#000;"></div>
<div style="left:34px;top:419px;width:1px;height:8px;background:#000;"></div>
<div style="left:169px;top:415px;width:1px;height:15px;background:#666666;"></div>
<div style="left:170px;top:416px;width:1px;height:14px;background:#ffffff;"></div>
<div style="left:170px;top:416px;width:15px;height:1px;background:#ffffff;"></div>
<div style="left:176px;top:419px;width:1px;height:8px;background:#000;"></div>
<div style="left:177px;top:420px;width:1px;height:6px;background:#000;"></div>
<div style="left:178px;top:421px;width:1px;height:4px;background:#000;"></div>
<div style="left:179px;top:422px;width:1px;height:2px;background:#000;"></div>
<div style="left:184px;top:416px;width:1px;height:14px;background:#666666;"></div>
<div style="left:41px;top:415px;width:102px;height:15px;background:#9999cc;"></div>
<div style="left:41px;top:415px;width:1px;height:15px;background:#666699;"></div>
<div style="left:142px;top:415px;width:1px;height:15px;background:#666699;"></div>
<div style="left:41px;top:415px;width:102px;height:1px;background:#666699;"></div>
<div style="left:42px;top:416px;width:1px;height:14px;background:#ccccff;"></div>
<div style="left:42px;top:416px;width:100px;height:1px;background:#ccccff;"></div>
<svg style="left:45px;top:418px;shape-rendering:crispEdges;" width="95" height="10" viewBox="0 0 95 10"><defs><pattern id="bp264" width="4" height="4" patternUnits="userSpaceOnUse"><rect x="0" y="0" width="1" height="1" fill="#ccccff"/><rect x="1" y="1" width="1" height="1" fill="#666699"/><rect x="2" y="2" width="1" height="1" fill="#ccccff"/><rect x="3" y="3" width="1" height="1" fill="#666699"/></pattern></defs><rect width="95" height="10" fill="url(#bp264)"/></svg>
<div style="left:202px;top:147px;width:1px;height:285px;background:#ffffff;"></div>
<div style="left:211px;top:147px;width:1px;height:285px;background:#666666;"></div>
<svg style="left:205px;top:149px;shape-rendering:crispEdges;" width="4" height="280" viewBox="0 0 4 280"><defs><pattern id="bp267" width="4" height="4" patternUnits="userSpaceOnUse"><rect x="0" y="0" width="1" height="1" fill="#ffffff"/><rect x="1" y="1" width="1" height="1" fill="#666666"/><rect x="2" y="2" width="1" height="1" fill="#ffffff"/><rect x="3" y="3" width="1" height="1" fill="#666666"/></pattern></defs><rect width="4" height="280" fill="url(#bp267)"/></svg>
<div style="left:212px;top:169px;width:491px;height:1px;background:#ffffff;"></div>
<div style="left:212px;top:169px;width:1px;height:262px;background:#ffffff;"></div>
<div style="left:703px;top:169px;width:1px;height:263px;background:#666666;"></div>
<div style="left:212px;top:431px;width:492px;height:1px;background:#666666;"></div>
<svg style="left:214px;top:151px;shape-rendering:crispEdges;overflow:hidden;" width="79" height="18" viewBox="0 0 79 18"><polygon points="0.5,18 0.5,6.5 6.5,0.5 78.5,0.5 78.5,18" fill="#999999" stroke="none"/><polyline points="1.5,18 1.5,7 7,1.5 78,1.5" fill="none" stroke="#b3b3b3" stroke-width="1"/><polyline points="0.5,18 0.5,6.5 6.5,0.5 78.5,0.5 78.5,18" fill="none" stroke="#666666" stroke-width="1"/></svg>
<svg style="left:292px;top:151px;shape-rendering:crispEdges;overflow:hidden;" width="83" height="18" viewBox="0 0 83 18"><polygon points="0.5,18 0.5,6.5 6.5,0.5 82.5,0.5 82.5,18" fill="#999999" stroke="none"/><polyline points="1.5,18 1.5,7 7,1.5 82,1.5" fill="none" stroke="#b3b3b3" stroke-width="1"/><polyline points="0.5,18 0.5,6.5 6.5,0.5 82.5,0.5 82.5,18" fill="none" stroke="#666666" stroke-width="1"/></svg>
<svg style="left:374px;top:151px;shape-rendering:crispEdges;overflow:hidden;" width="70" height="18" viewBox="0 0 70 18"><polygon points="0.5,18 0.5,6.5 6.5,0.5 69.5,0.5 69.5,18" fill="#999999" stroke="none"/><polyline points="1.5,18 1.5,7 7,1.5 69,1.5" fill="none" stroke="#b3b3b3" stroke-width="1"/><polyline points="0.5,18 0.5,6.5 6.5,0.5 69.5,0.5 69.5,18" fill="none" stroke="#666666" stroke-width="1"/></svg>
<svg style="left:443px;top:151px;shape-rendering:crispEdges;overflow:hidden;" width="92" height="20" viewBox="0 0 92 20"><polygon points="0.5,20 0.5,6.5 6.5,0.5 91.5,0.5 91.5,20" fill="#cccccc" stroke="none"/><polyline points="1.5,19 1.5,7 7,1.5 91,1.5" fill="none" stroke="#ffffff" stroke-width="1"/><polyline points="0.5,18 0.5,6.5 6.5,0.5 91.5,0.5 91.5,18" fill="none" stroke="#666666" stroke-width="1"/></svg>
<svg style="left:534px;top:151px;shape-rendering:crispEdges;overflow:hidden;" width="73" height="18" viewBox="0 0 73 18"><polygon points="0.5,18 0.5,6.5 6.5,0.5 72.5,0.5 72.5,18" fill="#999999" stroke="none"/><polyline points="1.5,18 1.5,7 7,1.5 72,1.5" fill="none" stroke="#b3b3b3" stroke-width="1"/><polyline points="0.5,18 0.5,6.5 6.5,0.5 72.5,0.5 72.5,18" fill="none" stroke="#666666" stroke-width="1"/></svg>
<svg style="left:606px;top:151px;shape-rendering:crispEdges;overflow:hidden;" width="55" height="18" viewBox="0 0 55 18"><polygon points="0.5,18 0.5,6.5 6.5,0.5 54.5,0.5 54.5,18" fill="#999999" stroke="none"/><polyline points="1.5,18 1.5,7 7,1.5 54,1.5" fill="none" stroke="#b3b3b3" stroke-width="1"/><polyline points="0.5,18 0.5,6.5 6.5,0.5 54.5,0.5 54.5,18" fill="none" stroke="#666666" stroke-width="1"/></svg>
<svg style="left:225.0px;top:155.0px;" width="11" height="11" viewBox="0 0 11 11"><circle cx="5.5" cy="5.5" r="4" fill="none" stroke="#000" stroke-width="1.2"/><circle cx="5.5" cy="5.5" r="2.3" fill="#000"/></svg>
<span id="t31" class="t b" style="left:238.5px;top:153px;letter-spacing:-0.017px;">Service</span>
<svg style="left:303.0px;top:155.0px;" width="11" height="11" viewBox="0 0 11 11"><circle cx="5.5" cy="5.5" r="4" fill="none" stroke="#000" stroke-width="1.2"/><circle cx="5.5" cy="5.5" r="2.3" fill="#000"/></svg>
<span id="t32" class="t b" style="left:317px;top:153px;letter-spacing:-0.006px;">Schema</span>
<svg style="left:384.0px;top:155.0px;" width="11" height="11" viewBox="0 0 11 11"><circle cx="5.5" cy="5.5" r="4" fill="none" stroke="#000" stroke-width="1.2"/><circle cx="5.5" cy="5.5" r="2.3" fill="#000"/></svg>
<span id="t33" class="t b" style="left:399px;top:153px;letter-spacing:0.387px;">Table</span>
<svg style="left:453.0px;top:155.0px;" width="11" height="11" viewBox="0 0 11 11"><circle cx="5.5" cy="5.5" r="4" fill="none" stroke="#000" stroke-width="1.2"/><circle cx="5.5" cy="5.5" r="2.3" fill="#000"/></svg>
<span id="t34" class="t b" style="left:468px;top:153px;letter-spacing:0.443px;">Columns</span>
<svg style="left:545.0px;top:155.0px;" width="11" height="11" viewBox="0 0 11 11"><circle cx="5.5" cy="5.5" r="4" fill="none" stroke="#000" stroke-width="1.2"/></svg>
<span id="t35" class="t b" style="left:560px;top:153px;letter-spacing:-0.158px;">FKeys</span>
<span id="t36" class="t b" style="left:618px;top:153px;letter-spacing:0.350px;">Hints</span>
<div style="left:214px;top:171px;width:486px;height:257px;box-sizing:border-box;border:1px solid #666666;background:#cccccc;box-shadow:1px 1px 0 #ffffff;"></div>
<div style="left:215px;top:172px;width:97px;height:1px;background:#ffffff;"></div>
<div style="left:215px;top:172px;width:1px;height:14px;background:#ffffff;"></div>
<div style="left:215px;top:186px;width:98px;height:1px;background:#666666;"></div>
<div style="left:312px;top:172px;width:1px;height:15px;background:#666666;"></div>
<div style="left:313px;top:172px;width:63px;height:1px;background:#ffffff;"></div>
<div style="left:313px;top:172px;width:1px;height:14px;background:#ffffff;"></div>
<div style="left:313px;top:186px;width:64px;height:1px;background:#666666;"></div>
<div style="left:376px;top:172px;width:1px;height:15px;background:#666666;"></div>
<div style="left:377px;top:172px;width:57px;height:1px;background:#ffffff;"></div>
<div style="left:377px;top:172px;width:1px;height:14px;background:#ffffff;"></div>
<div style="left:377px;top:186px;width:58px;height:1px;background:#666666;"></div>
<div style="left:434px;top:172px;width:1px;height:15px;background:#666666;"></div>
<div style="left:435px;top:172px;width:57px;height:1px;background:#ffffff;"></div>
<div style="left:435px;top:172px;width:1px;height:14px;background:#ffffff;"></div>
<div style="left:435px;top:186px;width:58px;height:1px;background:#666666;"></div>
<div style="left:492px;top:172px;width:1px;height:15px;background:#666666;"></div>
<div style="left:493px;top:172px;width:191px;height:1px;background:#ffffff;"></div>
<div style="left:493px;top:172px;width:1px;height:14px;background:#ffffff;"></div>
<div style="left:493px;top:186px;width:191px;height:1px;background:#666666;"></div>
<div style="left:684px;top:186px;width:15px;height:1px;background:#666666;"></div>
<span id="t37" class="t p" style="left:163.5px;width:200px;text-align:center;top:172px;">Name</span>
<span id="t38" class="t p" style="left:244.5px;width:200px;text-align:center;top:172px;">Type</span>
<span id="t39" class="t p" style="left:305.5px;width:200px;text-align:center;top:172px;">Unit</span>
<span id="t40" class="t p" style="left:363.5px;width:200px;text-align:center;top:172px;">Indexed</span>
<div style="left:493px;top:172px;width:191px;height:14px;overflow:hidden;">
<span id="t41" class="t p" style="left:153px;top:0px;letter-spacing:-0.150px;">Description</span>
</div>
<div style="left:215px;top:187px;width:469px;height:225px;overflow:hidden;background:#fff;">
<div style="left:0;top:0px;width:469px;height:15px;background:#ccccff;"></div>
<div style="left:0;top:15px;width:469px;height:1px;background:#999999;"></div>
<span id="t42" class="t p" style="left:1px;top:0px;letter-spacing:-0.227px;">hipno</span>
<span id="t43" class="t p" style="left:99px;top:0px;letter-spacing:-0.400px;">int</span>
<span id="t44" class="t p" style="left:279px;top:0px;letter-spacing:0.033px;">Number of the star in the HIPPARCOS catalogue</span>
<div style="left:0;top:31px;width:469px;height:1px;background:#999999;"></div>
<span id="t45" class="t p" style="left:1px;top:16px;letter-spacing:-0.172px;">srcsel</span>
<span id="t46" class="t p" style="left:99px;top:16px;letter-spacing:-0.397px;">char</span>
<span id="t47" class="t p" style="left:279px;top:16px;letter-spacing:-0.084px;">Source of the astrometric solution</span>
<div style="left:0;top:32px;width:469px;height:15px;background:#ccccff;"></div>
<div style="left:0;top:47px;width:469px;height:1px;background:#999999;"></div>
<span id="t48" class="t p" style="left:1px;top:32px;letter-spacing:0.492px;">raj2000</span>
<span id="t49" class="t p" style="left:99px;top:32px;letter-spacing:-0.001px;">double</span>
<span id="t50" class="t p" style="left:163px;top:32px;letter-spacing:-0.244px;">deg</span>
<span id="t51" class="t p" style="left:279px;top:32px;letter-spacing:-0.041px;">Right ascension from a single-star solution</span>
<div style="left:0;top:48px;width:469px;height:15px;background:#ccccff;"></div>
<div style="left:0;top:63px;width:469px;height:1px;background:#999999;"></div>
<span id="t52" class="t p" style="left:1px;top:48px;letter-spacing:0.526px;">dej2000</span>
<span id="t53" class="t p" style="left:99px;top:48px;letter-spacing:-0.001px;">double</span>
<span id="t54" class="t p" style="left:163px;top:48px;letter-spacing:-0.244px;">deg</span>
<span id="t55" class="t p" style="left:279px;top:48px;letter-spacing:-0.031px;">Declination from a single-star solution</span>
<div style="left:0;top:64px;width:469px;height:15px;background:#ccccff;"></div>
<div style="left:0;top:79px;width:469px;height:1px;background:#999999;"></div>
<span id="t56" class="t p" style="left:1px;top:64px;letter-spacing:0.106px;">pmra</span>
<span id="t57" class="t p" style="left:99px;top:64px;letter-spacing:-0.400px;">float</span>
<span id="t58" class="t p" style="left:163px;top:64px;letter-spacing:0.281px;">deg/yr</span>
<span id="t59" class="t p" style="left:279px;top:64px;letter-spacing:0.037px;">Proper motion in right ascension for a single star</span>
<div style="left:0;top:80px;width:469px;height:15px;background:#ccccff;"></div>
<div style="left:0;top:95px;width:469px;height:1px;background:#999999;"></div>
<span id="t60" class="t p" style="left:1px;top:80px;letter-spacing:0.036px;">pmde</span>
<span id="t61" class="t p" style="left:99px;top:80px;letter-spacing:-0.400px;">float</span>
<span id="t62" class="t p" style="left:163px;top:80px;letter-spacing:0.281px;">deg/yr</span>
<span id="t63" class="t p" style="left:279px;top:80px;letter-spacing:-0.089px;">Proper motion in declination for a single star</span>
<div style="left:0;top:111px;width:469px;height:1px;background:#999999;"></div>
<span id="t64" class="t p" style="left:1px;top:96px;letter-spacing:-0.149px;">t_ra</span>
<span id="t65" class="t p" style="left:99px;top:96px;letter-spacing:-0.400px;">float</span>
<span id="t66" class="t p" style="left:163px;top:96px;letter-spacing:-0.400px;">yr</span>
<span id="t67" class="t p" style="left:279px;top:96px;letter-spacing:-0.125px;">Central epoch of RA (SI)</span>
<div style="left:0;top:127px;width:469px;height:1px;background:#999999;"></div>
<span id="t68" class="t p" style="left:1px;top:112px;letter-spacing:0.148px;">err_ra</span>
<span id="t69" class="t p" style="left:99px;top:112px;letter-spacing:-0.400px;">float</span>
<span id="t70" class="t p" style="left:163px;top:112px;letter-spacing:-0.244px;">deg</span>
<span id="t71" class="t p" style="left:279px;top:112px;letter-spacing:0.074px;">Error in RA from the single star solution</span>
<div style="left:0;top:143px;width:469px;height:1px;background:#999999;"></div>
<span id="t72" class="t p" style="left:1px;top:128px;letter-spacing:0.234px;">err_pmra</span>
<span id="t73" class="t p" style="left:99px;top:128px;letter-spacing:-0.400px;">float</span>
<span id="t74" class="t p" style="left:163px;top:128px;letter-spacing:0.281px;">deg/yr</span>
<span id="t75" class="t p" style="left:279px;top:128px;letter-spacing:-0.047px;">Mean error in PM(RA)*cos(delta) from the single star solution</span>
<div style="left:0;top:159px;width:469px;height:1px;background:#999999;"></div>
<span id="t76" class="t p" style="left:1px;top:144px;letter-spacing:-0.214px;">t_de</span>
<span id="t77" class="t p" style="left:99px;top:144px;letter-spacing:-0.400px;">float</span>
<span id="t78" class="t p" style="left:163px;top:144px;letter-spacing:-0.400px;">yr</span>
<span id="t79" class="t p" style="left:279px;top:144px;letter-spacing:-0.155px;">Central epoch of Dec (SI)</span>
<div style="left:0;top:175px;width:469px;height:1px;background:#999999;"></div>
<span id="t80" class="t p" style="left:1px;top:160px;letter-spacing:0.106px;">err_de</span>
<span id="t81" class="t p" style="left:99px;top:160px;letter-spacing:-0.400px;">float</span>
<span id="t82" class="t p" style="left:163px;top:160px;letter-spacing:-0.244px;">deg</span>
<span id="t83" class="t p" style="left:279px;top:160px;letter-spacing:-0.165px;">Error in Dec from the single star solution</span>
<div style="left:0;top:191px;width:469px;height:1px;background:#999999;"></div>
<span id="t84" class="t p" style="left:1px;top:176px;letter-spacing:0.147px;">err_pmde</span>
<span id="t85" class="t p" style="left:99px;top:176px;letter-spacing:-0.400px;">float</span>
<span id="t86" class="t p" style="left:163px;top:176px;letter-spacing:0.281px;">deg/yr</span>
<span id="t87" class="t p" style="left:279px;top:176px;letter-spacing:0.008px;">Mean error in PM(Dec) form the single star solution</span>
<div style="left:0;top:207px;width:469px;height:1px;background:#999999;"></div>
<span id="t88" class="t p" style="left:1px;top:192px;letter-spacing:-0.111px;">parallax</span>
<span id="t89" class="t p" style="left:99px;top:192px;letter-spacing:-0.400px;">float</span>
<span id="t90" class="t p" style="left:163px;top:192px;letter-spacing:-0.244px;">deg</span>
<span id="t91" class="t p" style="left:279px;top:192px;letter-spacing:0.051px;">Parallax used in deriving the data</span>
<div style="left:0;top:223px;width:469px;height:1px;background:#999999;"></div>
<span id="t92" class="t p" style="left:1px;top:208px;letter-spacing:-0.000px;">e_parallax</span>
<span id="t93" class="t p" style="left:99px;top:208px;letter-spacing:-0.400px;">float</span>
<span id="t94" class="t p" style="left:163px;top:208px;letter-spacing:-0.244px;">deg</span>
<span id="t95" class="t p" style="left:279px;top:208px;letter-spacing:0.023px;">Mean error of the parallax</span>
<div style="left:97px;top:0;width:1px;height:225px;background:#999999;"></div>
<div style="left:161px;top:0;width:1px;height:225px;background:#999999;"></div>
<div style="left:219px;top:0;width:1px;height:225px;background:#999999;"></div>
<div style="left:277px;top:0;width:1px;height:225px;background:#999999;"></div>
<div style="left:242px;top:1px;width:12px;height:12px;box-sizing:border-box;border:1px solid #666666;background:#ccccff;box-shadow:inset 1px 1px 0 #ffffff,1px 1px 0 #ffffff;"></div>
<div style="left:245px;top:6px;width:2px;height:5px;background:#000;"></div>
<div style="left:251px;top:4px;width:1px;height:2px;background:#000;"></div>
<div style="left:250px;top:5px;width:1px;height:2px;background:#000;"></div>
<div style="left:249px;top:6px;width:1px;height:2px;background:#000;"></div>
<div style="left:248px;top:7px;width:1px;height:2px;background:#000;"></div>
<div style="left:247px;top:8px;width:1px;height:2px;background:#000;"></div>
<div style="left:242px;top:17px;width:12px;height:12px;box-sizing:border-box;border:1px solid #666666;background:#ffffff;box-shadow:inset 1px 1px 0 #ffffff,1px 1px 0 #ffffff;"></div>
<div style="left:242px;top:33px;width:12px;height:12px;box-sizing:border-box;border:1px solid #666666;background:#ccccff;box-shadow:inset 1px 1px 0 #ffffff,1px 1px 0 #ffffff;"></div>
<div style="left:245px;top:38px;width:2px;height:5px;background:#000;"></div>
<div style="left:251px;top:36px;width:1px;height:2px;background:#000;"></div>
<div style="left:250px;top:37px;width:1px;height:2px;background:#000;"></div>
<div style="left:249px;top:38px;width:1px;height:2px;background:#000;"></div>
<div style="left:248px;top:39px;width:1px;height:2px;background:#000;"></div>
<div style="left:247px;top:40px;width:1px;height:2px;background:#000;"></div>
<div style="left:242px;top:49px;width:12px;height:12px;box-sizing:border-box;border:1px solid #666666;background:#ccccff;box-shadow:inset 1px 1px 0 #ffffff,1px 1px 0 #ffffff;"></div>
<div style="left:245px;top:54px;width:2px;height:5px;background:#000;"></div>
<div style="left:251px;top:52px;width:1px;height:2px;background:#000;"></div>
<div style="left:250px;top:53px;width:1px;height:2px;background:#000;"></div>
<div style="left:249px;top:54px;width:1px;height:2px;background:#000;"></div>
<div style="left:248px;top:55px;width:1px;height:2px;background:#000;"></div>
<div style="left:247px;top:56px;width:1px;height:2px;background:#000;"></div>
<div style="left:242px;top:65px;width:12px;height:12px;box-sizing:border-box;border:1px solid #666666;background:#ccccff;box-shadow:inset 1px 1px 0 #ffffff,1px 1px 0 #ffffff;"></div>
<div style="left:242px;top:81px;width:12px;height:12px;box-sizing:border-box;border:1px solid #666666;background:#ccccff;box-shadow:inset 1px 1px 0 #ffffff,1px 1px 0 #ffffff;"></div>
<div style="left:242px;top:97px;width:12px;height:12px;box-sizing:border-box;border:1px solid #666666;background:#ffffff;box-shadow:inset 1px 1px 0 #ffffff,1px 1px 0 #ffffff;"></div>
<div style="left:242px;top:113px;width:12px;height:12px;box-sizing:border-box;border:1px solid #666666;background:#ffffff;box-shadow:inset 1px 1px 0 #ffffff,1px 1px 0 #ffffff;"></div>
<div style="left:242px;top:129px;width:12px;height:12px;box-sizing:border-box;border:1px solid #666666;background:#ffffff;box-shadow:inset 1px 1px 0 #ffffff,1px 1px 0 #ffffff;"></div>
<div style="left:242px;top:145px;width:12px;height:12px;box-sizing:border-box;border:1px solid #666666;background:#ffffff;box-shadow:inset 1px 1px 0 #ffffff,1px 1px 0 #ffffff;"></div>
<div style="left:242px;top:161px;width:12px;height:12px;box-sizing:border-box;border:1px solid #666666;background:#ffffff;box-shadow:inset 1px 1px 0 #ffffff,1px 1px 0 #ffffff;"></div>
<div style="left:242px;top:177px;width:12px;height:12px;box-sizing:border-box;border:1px solid #666666;background:#ffffff;box-shadow:inset 1px 1px 0 #ffffff,1px 1px 0 #ffffff;"></div>
<div style="left:242px;top:193px;width:12px;height:12px;box-sizing:border-box;border:1px solid #666666;background:#ffffff;box-shadow:inset 1px 1px 0 #ffffff,1px 1px 0 #ffffff;"></div>
<div style="left:242px;top:209px;width:12px;height:12px;box-sizing:border-box;border:1px solid #666666;background:#ffffff;box-shadow:inset 1px 1px 0 #ffffff,1px 1px 0 #ffffff;"></div>
</div>
<div style="left:684px;top:187px;width:15px;height:225px;background:#cccccc;"></div>
<div style="left:684px;top:187px;width:1px;height:225px;background:#666666;"></div>
<div style="left:685px;top:202px;width:1px;height:195px;background:#b8b8b8;"></div>
<div style="left:685px;top:187px;width:14px;height:1px;background:#ffffff;"></div>
<div style="left:685px;top:187px;width:1px;height:15px;background:#ffffff;"></div>
<div style="left:691px;top:192px;width:2px;height:1px;background:#000;"></div>
<div style="left:690px;top:193px;width:4px;height:1px;background:#000;"></div>
<div style="left:689px;top:194px;width:6px;height:1px;background:#000;"></div>
<div style="left:688px;top:195px;width:8px;height:1px;background:#000;"></div>
<div style="left:684px;top:396px;width:15px;height:1px;background:#666666;"></div>
<div style="left:685px;top:397px;width:14px;height:1px;background:#ffffff;"></div>
<div style="left:685px;top:397px;width:1px;height:15px;background:#ffffff;"></div>
<div style="left:688px;top:403px;width:8px;height:1px;background:#000;"></div>
<div style="left:689px;top:404px;width:6px;height:1px;background:#000;"></div>
<div style="left:690px;top:405px;width:4px;height:1px;background:#000;"></div>
<div style="left:691px;top:406px;width:2px;height:1px;background:#000;"></div>
<div style="left:685px;top:411px;width:14px;height:1px;background:#666666;"></div>
<div style="left:684px;top:202px;width:15px;height:43px;background:#9999cc;"></div>
<div style="left:684px;top:202px;width:15px;height:1px;background:#666699;"></div>
<div style="left:684px;top:244px;width:15px;height:1px;background:#666699;"></div>
<div style="left:684px;top:202px;width:1px;height:43px;background:#666699;"></div>
<div style="left:685px;top:203px;width:14px;height:1px;background:#ccccff;"></div>
<div style="left:685px;top:203px;width:1px;height:41px;background:#ccccff;"></div>
<svg style="left:687px;top:206px;shape-rendering:crispEdges;" width="10" height="36" viewBox="0 0 10 36"><defs><pattern id="bp451" width="4" height="4" patternUnits="userSpaceOnUse"><rect x="0" y="0" width="1" height="1" fill="#ccccff"/><rect x="1" y="1" width="1" height="1" fill="#666699"/><rect x="2" y="2" width="1" height="1" fill="#ccccff"/><rect x="3" y="3" width="1" height="1" fill="#666699"/></pattern></defs><rect width="10" height="36" fill="url(#bp451)"/></svg>
<div style="left:215px;top:412px;width:469px;height:15px;background:#cccccc;"></div>
<div style="left:215px;top:412px;width:469px;height:1px;background:#666666;"></div>
<div style="left:230px;top:413px;width:439px;height:1px;background:#b8b8b8;"></div>
<div style="left:215px;top:413px;width:1px;height:14px;background:#ffffff;"></div>
<div style="left:215px;top:413px;width:15px;height:1px;background:#ffffff;"></div>
<div style="left:220px;top:419px;width:1px;height:2px;background:#000;"></div>
<div style="left:221px;top:418px;width:1px;height:4px;background:#000;"></div>
<div style="left:222px;top:417px;width:1px;height:6px;background:#000;"></div>
<div style="left:223px;top:416px;width:1px;height:8px;background:#000;"></div>
<div style="left:668px;top:412px;width:1px;height:15px;background:#666666;"></div>
<div style="left:669px;top:413px;width:1px;height:14px;background:#ffffff;"></div>
<div style="left:669px;top:413px;width:15px;height:1px;background:#ffffff;"></div>
<div style="left:675px;top:416px;width:1px;height:8px;background:#000;"></div>
<div style="left:676px;top:417px;width:1px;height:6px;background:#000;"></div>
<div style="left:677px;top:418px;width:1px;height:4px;background:#000;"></div>
<div style="left:678px;top:419px;width:1px;height:2px;background:#000;"></div>
<div style="left:683px;top:413px;width:1px;height:14px;background:#666666;"></div>
<div style="left:230px;top:412px;width:202px;height:15px;background:#9999cc;"></div>
<div style="left:230px;top:412px;width:1px;height:15px;background:#666699;"></div>
<div style="left:431px;top:412px;width:1px;height:15px;background:#666699;"></div>
<div style="left:230px;top:412px;width:202px;height:1px;background:#666699;"></div>
<div style="left:231px;top:413px;width:1px;height:14px;background:#ccccff;"></div>
<div style="left:231px;top:413px;width:200px;height:1px;background:#ccccff;"></div>
<svg style="left:234px;top:415px;shape-rendering:crispEdges;" width="195" height="10" viewBox="0 0 195 10"><defs><pattern id="bp475" width="4" height="4" patternUnits="userSpaceOnUse"><rect x="0" y="0" width="1" height="1" fill="#ccccff"/><rect x="1" y="1" width="1" height="1" fill="#666699"/><rect x="2" y="2" width="1" height="1" fill="#ccccff"/><rect x="3" y="3" width="1" height="1" fill="#666699"/></pattern></defs><rect width="195" height="10" fill="url(#bp475)"/></svg>
<div style="left:22px;top:455px;width:4px;height:1px;background:#000;"></div>
<div style="left:150px;top:455px;width:557px;height:1px;background:#000;"></div>
<div style="left:22px;top:455px;width:1px;height:39px;background:#000;"></div>
<div style="left:706px;top:455px;width:1px;height:39px;background:#000;"></div>
<div style="left:22px;top:493px;width:685px;height:1px;background:#000;"></div>
<span id="t96" class="t b" style="left:28px;top:448px;letter-spacing:0.369px;">Service Capabilities</span>
<span id="t97" class="t b" style="left:26px;top:472px;letter-spacing:0.237px;">Query Language:</span>
<div style="left:133px;top:467px;width:90px;height:23px;box-sizing:border-box;border:1px solid #666666;background:#cccccc;box-shadow:inset 1px 1px 0 #ffffff,1px 1px 0 #ffffff;"></div>
<span id="t98" class="t b" style="left:138px;top:471px;letter-spacing:1.200px;">ADQL-2.0</span>
<div style="left:207px;top:476px;width:10px;height:1px;background:#000;"></div>
<div style="left:208px;top:477px;width:8px;height:1px;background:#000;"></div>
<div style="left:209px;top:478px;width:6px;height:1px;background:#000;"></div>
<div style="left:210px;top:479px;width:4px;height:1px;background:#000;"></div>
<div style="left:211px;top:480px;width:2px;height:1px;background:#000;"></div>
<span id="t99" class="t b" style="left:235px;top:472px;letter-spacing:0.164px;">Max Rows:</span>
<div style="left:304px;top:467px;width:146px;height:23px;box-sizing:border-box;border:1px solid #666666;background:#ffffff;box-shadow:inset 1px 1px 0 #ffffff,1px 1px 0 #ffffff;"></div>
<div style="left:428px;top:468px;width:22px;height:22px;background:#cccccc;"></div>
<div style="left:428px;top:468px;width:1px;height:22px;background:#666666;"></div>
<div style="left:429px;top:468px;width:1px;height:22px;background:#ffffff;"></div>
<div style="left:429px;top:468px;width:21px;height:1px;background:#ffffff;"></div>
<span id="t100" class="t b" style="left:307px;top:471px;letter-spacing:0.780px;">2000 (default)</span>
<div style="left:434px;top:477px;width:10px;height:1px;background:#000;"></div>
<div style="left:435px;top:478px;width:8px;height:1px;background:#000;"></div>
<div style="left:436px;top:479px;width:6px;height:1px;background:#000;"></div>
<div style="left:437px;top:480px;width:4px;height:1px;background:#000;"></div>
<div style="left:438px;top:481px;width:2px;height:1px;background:#000;"></div>
<span id="t101" class="t b" style="left:462px;top:472px;letter-spacing:0.151px;">Uploads:</span>
<div style="left:519px;top:467px;width:184px;height:23px;box-sizing:border-box;border:1px solid #999999;"></div>
<span id="t102" class="t p" style="left:522px;top:471px;letter-spacing:0.380px;">20Mb</span>
<div style="left:22px;top:504px;width:5px;height:1px;background:#000;"></div>
<div style="left:96px;top:504px;width:611px;height:1px;background:#000;"></div>
<div style="left:22px;top:504px;width:1px;height:232px;background:#000;"></div>
<div style="left:706px;top:504px;width:1px;height:232px;background:#000;"></div>
<div style="left:22px;top:735px;width:685px;height:1px;background:#000;"></div>
<span id="t103" class="t b" style="left:29px;top:497px;letter-spacing:0.637px;">ADQL Text</span>
<span id="t104" class="t b" style="left:28px;top:529px;letter-spacing:0.018px;">Mode:</span>
<div style="left:68px;top:524px;width:116px;height:23px;box-sizing:border-box;border:1px solid #666666;background:#cccccc;box-shadow:inset 1px 1px 0 #ffffff,1px 1px 0 #ffffff;"></div>
<span id="t105" class="t b" style="left:73px;top:528px;letter-spacing:0.231px;">Synchronous</span>
<div style="left:168px;top:533px;width:10px;height:1px;background:#000;"></div>
<div style="left:169px;top:534px;width:8px;height:1px;background:#000;"></div>
<div style="left:170px;top:535px;width:6px;height:1px;background:#000;"></div>
<div style="left:171px;top:536px;width:4px;height:1px;background:#000;"></div>
<div style="left:172px;top:537px;width:2px;height:1px;background:#000;"></div>
<div style="left:342px;top:518px;width:35px;height:35px;box-sizing:border-box;border:1px solid #666666;background:#cccccc;box-shadow:inset 1px 1px 0 #ffffff,1px 1px 0 #ffffff;"></div>
<div style="left:378px;top:518px;width:35px;height:35px;box-sizing:border-box;border:1px solid #666666;background:#cccccc;box-shadow:inset 1px 1px 0 #ffffff,1px 1px 0 #ffffff;"></div>
<div style="left:414px;top:518px;width:35px;height:35px;box-sizing:border-box;border:1px solid #666666;background:#cccccc;box-shadow:inset 1px 1px 0 #ffffff,1px 1px 0 #ffffff;"></div>
<div style="left:450px;top:518px;width:35px;height:35px;box-sizing:border-box;border:1px solid #666666;background:#cccccc;box-shadow:inset 1px 1px 0 #ffffff,1px 1px 0 #ffffff;"></div>
<div style="left:486px;top:518px;width:35px;height:35px;box-sizing:border-box;border:1px solid #666666;background:#cccccc;box-shadow:inset 1px 1px 0 #ffffff,1px 1px 0 #ffffff;"></div>
<div style="left:522px;top:518px;width:35px;height:35px;box-sizing:border-box;border:1px solid #666666;background:#cccccc;box-shadow:inset 1px 1px 0 #ffffff,1px 1px 0 #ffffff;"></div>
<div style="left:558px;top:518px;width:35px;height:35px;box-sizing:border-box;border:1px solid #999999;"></div>
<div style="left:594px;top:518px;width:35px;height:35px;box-sizing:border-box;border:1px solid #666666;background:#cccccc;box-shadow:inset 1px 1px 0 #ffffff,1px 1px 0 #ffffff;"></div>
<div style="left:630px;top:518px;width:35px;height:35px;box-sizing:border-box;border:1px solid #666666;background:#cccccc;box-shadow:inset 1px 1px 0 #ffffff,1px 1px 0 #ffffff;"></div>
<div style="left:666px;top:518px;width:35px;height:35px;box-sizing:border-box;border:1px solid #666666;background:#cccccc;box-shadow:inset 1px 1px 0 #ffffff,1px 1px 0 #ffffff;"></div>
<svg style="left:342px;top:518px;" width="36" height="36" viewBox="0 0 36 36"><path d="M7 10 h5.5 l2 -3.5 h8 q2 0 2 2 v13 q0 1.5 -1.5 1.5 h-15 q-1.5 0 -1.5 -1.5 v-10 q0 -1.5 1.5 -1.5 z" fill="#f9f9f3" stroke="#4f7fb2" stroke-width="1.1"/><path d="M20.5 15.8 h4 v4.5 h4.5 v4 h-4.5 v4.5 h-4 v-4.5 h-4.5 v-4 h4.5 z" fill="#12a236" stroke="#000" stroke-width="1.5" stroke-linejoin="round"/><path d="M21.8 17.3 v10 M17.5 21.6 h10" stroke="#3fd268" stroke-width="1" opacity="0.55"/></svg>
<svg style="left:378px;top:518px;" width="36" height="36" viewBox="0 0 36 36"><path d="M7 10 h5.5 l2 -3.5 h8 q2 0 2 2 v13 q0 1.5 -1.5 1.5 h-15 q-1.5 0 -1.5 -1.5 v-10 q0 -1.5 1.5 -1.5 z" fill="#f9f9f3" stroke="#4f7fb2" stroke-width="1.1"/><path d="M11 13 h5.5 l2 -3.5 h8 q2 0 2 2 v13 q0 1.5 -1.5 1.5 h-15 q-1.5 0 -1.5 -1.5 v-10 q0 -1.5 1.5 -1.5 z" fill="#f9f9f3" stroke="#4f7fb2" stroke-width="1.1"/><path d="M20.3 16 h4 v4.5 h4.5 v4 h-4.5 v4.5 h-4 v-4.5 h-4.5 v-4 h4.5 z" fill="#12a236" stroke="#000" stroke-width="1.5" stroke-linejoin="round"/><path d="M21.6 17.5 v10 M17.3 21.8 h10" stroke="#3fd268" stroke-width="1" opacity="0.55"/></svg>
<svg style="left:414px;top:518px;" width="36" height="36" viewBox="0 0 36 36"><path d="M7 10 h5.5 l2 -3.5 h8 q2 0 2 2 v13 q0 1.5 -1.5 1.5 h-15 q-1.5 0 -1.5 -1.5 v-10 q0 -1.5 1.5 -1.5 z" fill="#f9f9f3" stroke="#4f7fb2" stroke-width="1.1"/><rect x="16.2" y="20.2" width="12.6" height="4.6" rx="0.8" fill="#e4204c" stroke="#000" stroke-width="1.5"/><path d="M17.5 21.5 h10" stroke="#ff7090" stroke-width="1" opacity="0.7"/></svg>
<svg style="left:450px;top:518px;" width="36" height="36" viewBox="0 0 36 36"><path d="M7 13.5 h5.500 l2.5 -4 h11.5 q2 0 2 2 v12.5 q0 1.800 -1.800 1.800 h-19.700 q-1.800 0 -1.800 -1.800 v-8.700 q0 -1.800 1.800 -1.800 z" fill="#f9f9f3" stroke="#5a86b5" stroke-width="1"/><text x="15.6" y="16.3" font-family="Liberation Sans, sans-serif" font-weight="bold" font-size="6.2" fill="#000">Abc</text></svg>
<svg style="left:486px;top:518px;" width="36" height="36" viewBox="0 0 36 36">
<g transform="translate(18,17.6) rotate(-40)">
<path d="M-11 -4 H9.5 Q11 -4 11 -2.5 V4 L10 6.2 H-9.5 L-11 4 Z" fill="#bdbdbd" stroke="#9a9a9a" stroke-width="0.8"/>
<path d="M2.5 4 L3 6.2 H10 L11 4 Z" fill="#d27a96"/>
<rect x="-11" y="-4" width="22" height="8" rx="1.2" fill="#f6f6f4" stroke="#a6a6a6" stroke-width="0.7"/>
<path d="M2.5 -4 H9.8 Q11 -4 11 -2.8 V2.8 Q11 4 9.8 4 H2.5 Z" fill="#ee9db5"/>
</g></svg>
<svg style="left:522px;top:518px;" width="36" height="36" viewBox="0 0 36 36"><defs><linearGradient id="und" x1="0" y1="0" x2="0" y2="1"><stop offset="0" stop-color="#ffae1a"/><stop offset="1" stop-color="#ff8a00"/></linearGradient></defs><path d="M8.5 16 L15 9.5 L15 13.5 H21.5 Q28 13.5 28 19.5 V26 H22 V20.5 Q22 19 20.5 19 H15 V22.5 Z" fill="url(#und)" stroke="#000" stroke-width="1.6" stroke-linejoin="round"/></svg>
<svg style="left:558px;top:518px;" width="36" height="36" viewBox="0 0 36 36"><path d="M29 16 L22 8.5 L22 12.5 H15 Q7.5 12.5 7.5 19.5 V28 H14 V21.5 Q14 19.5 16 19.5 H22 V23.5 Z" fill="#9c9c9c" stroke="#838383" stroke-width="1.4" stroke-linejoin="round"/></svg>
<svg style="left:594px;top:518px;" width="36" height="36" viewBox="0 0 36 36"><rect x="7.5" y="10.5" width="21" height="14.5" rx="2" fill="#efefef" stroke="#000" stroke-width="1.5"/><text x="10.8" y="19.2" font-family="Liberation Sans, sans-serif" font-weight="bold" font-size="7.2" textLength="11.4" lengthAdjust="spacingAndGlyphs" fill="#08085c">TBL</text><path d="M10 23.2 l2.5 -2.7 l2.5 2.7 z" fill="#2c4474"/></svg>
<svg style="left:630px;top:518px;" width="36" height="36" viewBox="0 0 36 36"><rect x="7.5" y="10.5" width="21" height="14.5" rx="2" fill="#efefef" stroke="#000" stroke-width="1.5"/><text x="10.6" y="18.8" font-family="Liberation Sans, sans-serif" font-weight="bold" font-size="6.6" textLength="15" lengthAdjust="spacingAndGlyphs" fill="#08085c">COLS</text><path d="M10 23.2 l2.5 -2.700 l2.5 2.7 z" fill="#2c4474"/></svg>
<svg style="left:666px;top:518px;" width="36" height="36" viewBox="0 0 36 36"><path d="M17.8 7.8 L28 27.6 H7.6 Z" fill="#e60000" stroke="#e60000" stroke-width="1.4" stroke-linejoin="round"/><rect x="16.8" y="13" width="2.2" height="9" fill="#fff"/><rect x="16.8" y="23.5" width="2.2" height="2.2" fill="#fff"/></svg>
<div style="left:25px;top:580px;width:678px;height:1px;background:#ffffff;"></div>
<div style="left:25px;top:580px;width:1px;height:121px;background:#ffffff;"></div>
<div style="left:703px;top:580px;width:1px;height:122px;background:#666666;"></div>
<div style="left:25px;top:701px;width:679px;height:1px;background:#666666;"></div>
<svg style="left:27px;top:562px;shape-rendering:crispEdges;overflow:hidden;" width="77" height="18" viewBox="0 0 77 18"><polygon points="0.5,18 0.5,6.5 6.5,0.5 76.5,0.5 76.5,18" fill="#999999" stroke="none"/><polyline points="1.5,18 1.5,7 7,1.5 76,1.5" fill="none" stroke="#b3b3b3" stroke-width="1"/><polyline points="0.5,18 0.5,6.5 6.5,0.5 76.5,0.5 76.5,18" fill="none" stroke="#666666" stroke-width="1"/></svg>
<svg style="left:103px;top:562px;shape-rendering:crispEdges;overflow:hidden;" width="77" height="18" viewBox="0 0 77 18"><polygon points="0.5,18 0.5,6.5 6.5,0.5 76.5,0.5 76.5,18" fill="#999999" stroke="none"/><polyline points="1.5,18 1.5,7 7,1.5 76,1.5" fill="none" stroke="#b3b3b3" stroke-width="1"/><polyline points="0.5,18 0.5,6.5 6.5,0.5 76.5,0.5 76.5,18" fill="none" stroke="#666666" stroke-width="1"/></svg>
<svg style="left:179px;top:562px;shape-rendering:crispEdges;overflow:hidden;" width="55" height="20" viewBox="0 0 55 20"><polygon points="0.5,20 0.5,6.5 6.5,0.5 54.5,0.5 54.5,20" fill="#cccccc" stroke="none"/><polyline points="1.5,19 1.5,7 7,1.5 54,1.5" fill="none" stroke="#ffffff" stroke-width="1"/><polyline points="0.5,18 0.5,6.5 6.5,0.5 54.5,0.5 54.5,18" fill="none" stroke="#666666" stroke-width="1"/></svg>
<svg style="left:233px;top:562px;shape-rendering:crispEdges;overflow:hidden;" width="29" height="18" viewBox="0 0 29 18"><polygon points="0.5,18 0.5,6.5 6.5,0.5 28.5,0.5 28.5,18" fill="#999999" stroke="none"/><polyline points="1.5,18 1.5,7 7,1.5 28,1.5" fill="none" stroke="#b3b3b3" stroke-width="1"/><polyline points="0.5,18 0.5,6.5 6.5,0.5 28.5,0.5 28.5,18" fill="none" stroke="#666666" stroke-width="1"/></svg>
<span id="t106" class="t b" style="left:39px;top:564px;letter-spacing:1.097px;">ppmxl-1</span>
<span id="t107" class="t b" style="left:115px;top:564px;letter-spacing:1.164px;">ppmxl-2</span>
<span id="t108" class="t b" style="left:191px;top:564px;letter-spacing:0.142px;">califa</span>
<span id="t109" class="t b" style="left:244px;top:564px;">5</span>
<div style="left:27px;top:582px;width:673px;height:116px;box-sizing:border-box;border:1px solid #666666;background:#ffffff;box-shadow:1px 1px 0 #ffffff;"></div>
<div style="left:238px;top:658px;width:64px;height:15px;background:#ffb9b9;"></div>
<span class="t m" style="left:28px;top:584px;">SELECT TOP 10000</span>
<span class="t m" style="left:28px;top:599px;">   o.target_name, o.raj2000, o.dej2000, o.magg, o.magz,</span>
<span class="t m" style="left:28px;top:614px;">   h.hipno, h.raj2000, h.dej2000, h.pmra, h.pmde</span>
<span class="t m" style="left:28px;top:629px;">FROM califadr1.objects AS o</span>
<span class="t m" style="left:28px;top:644px;">JOIN arihip.main AS h</span>
<span class="t m" style="left:28px;top:659px;">  ON 1=CONTAINS(POINT(&#x27;ICRS&#x27;, o.raj3000, o.dej2000),</span>
<span class="t m" style="left:28px;top:674px;">                CIRCLE(&#x27;ICRS&#x27;, h.raj2000, h.dej2000, 5./3600.))</span>
<div style="left:25px;top:706px;width:92px;height:24px;box-sizing:border-box;border:1px solid #666666;background:#cccccc;box-shadow:inset 1px 1px 0 #ffffff,1px 1px 0 #ffffff;"></div>
<span id="t110" class="t b" style="left:43px;top:711px;letter-spacing:0.279px;">Examples</span>
<div style="left:123px;top:706px;width:14px;height:24px;box-sizing:border-box;border:1px solid #999999;"></div>
<div style="left:128px;top:717px;width:1px;height:2px;background:#8a8a8a;"></div>
<div style="left:129px;top:716px;width:1px;height:4px;background:#8a8a8a;"></div>
<div style="left:130px;top:715px;width:1px;height:6px;background:#8a8a8a;"></div>
<div style="left:131px;top:714px;width:1px;height:8px;background:#8a8a8a;"></div>
<div style="left:132px;top:713px;width:1px;height:10px;background:#8a8a8a;"></div>
<div style="left:140px;top:706px;width:14px;height:24px;box-sizing:border-box;border:1px solid #999999;"></div>
<div style="left:145px;top:713px;width:1px;height:10px;background:#8a8a8a;"></div>
<div style="left:146px;top:714px;width:1px;height:8px;background:#8a8a8a;"></div>
<div style="left:147px;top:715px;width:1px;height:6px;background:#8a8a8a;"></div>
<div style="left:148px;top:716px;width:1px;height:4px;background:#8a8a8a;"></div>
<div style="left:149px;top:717px;width:1px;height:2px;background:#8a8a8a;"></div>
<div style="left:160px;top:706px;width:463px;height:24px;box-sizing:border-box;border:1px solid #8c8c8c;background:#cccccc;box-shadow:inset 1px 1px 0 #ffffff,1px 1px 0 #ffffff;"></div>
<div style="left:630px;top:706px;width:72px;height:24px;box-sizing:border-box;border:1px solid #999999;"></div>
<span id="t111" class="t b" style="left:648px;top:711px;color:#8f8f8f;letter-spacing:0.467px;">Info</span>
<div style="left:676px;top:714px;width:2px;height:9px;background:#8c8c8c;"></div>
<div style="left:676px;top:721px;width:10px;height:2px;background:#8c8c8c;"></div>
<div style="left:676px;top:714px;width:5px;height:2px;background:#8c8c8c;"></div>
<div style="left:684px;top:719px;width:2px;height:4px;background:#8c8c8c;"></div>
<svg style="left:676px;top:713px;" width="10" height="10" viewBox="0 0 10 10"><path d="M5 0 H10 V5 Z" fill="#8c8c8c"/><path d="M4 6 L8 2" stroke="#8c8c8c" stroke-width="2.2"/></svg>
<div style="left:320px;top:747px;width:98px;height:24px;box-sizing:border-box;border:1px solid #666666;background:#cccccc;box-shadow:inset 1px 1px 0 #ffffff,1px 1px 0 #ffffff;"></div>
<span id="t112" class="t b" style="left:337px;top:752px;letter-spacing:0.257px;">Run Query</span>
</div></body></html>
